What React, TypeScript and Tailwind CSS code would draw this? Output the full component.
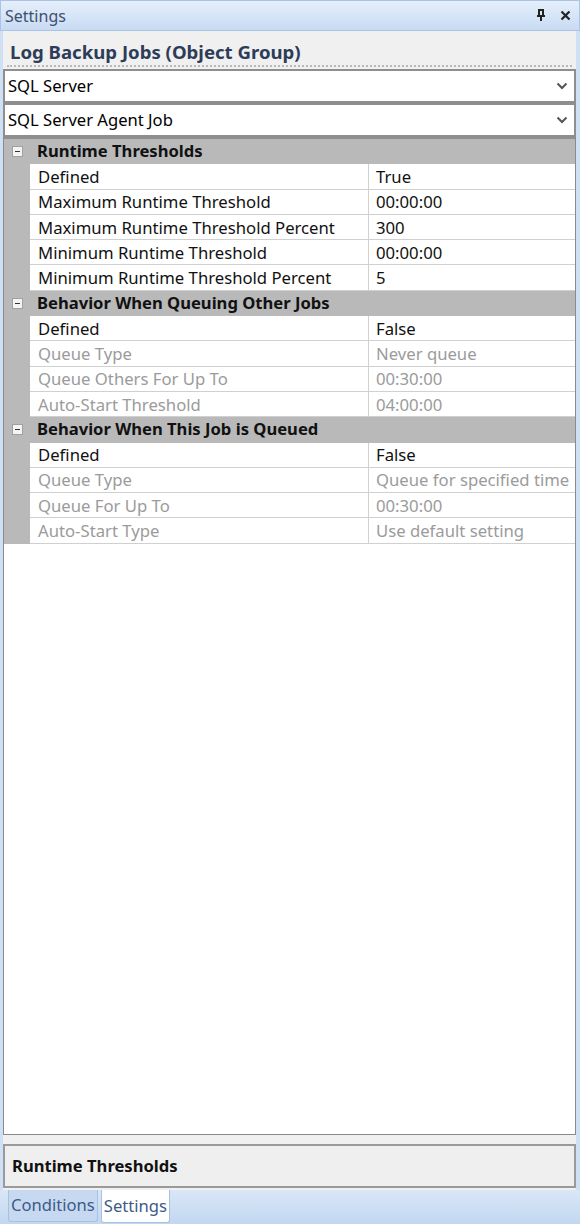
import React from 'react';

type Row = { name: string; value: string; disabled?: boolean };
type Category = { title: string; rows: Row[] };

const categories: Category[] = [
  {
    title: 'Runtime Thresholds',
    rows: [
      { name: 'Defined', value: 'True' },
      { name: 'Maximum Runtime Threshold', value: '00:00:00' },
      { name: 'Maximum Runtime Threshold Percent', value: '300' },
      { name: 'Minimum Runtime Threshold', value: '00:00:00' },
      { name: 'Minimum Runtime Threshold Percent', value: '5' },
    ],
  },
  {
    title: 'Behavior When Queuing Other Jobs',
    rows: [
      { name: 'Defined', value: 'False' },
      { name: 'Queue Type', value: 'Never queue', disabled: true },
      { name: 'Queue Others For Up To', value: '00:30:00', disabled: true },
      { name: 'Auto-Start Threshold', value: '04:00:00', disabled: true },
    ],
  },
  {
    title: 'Behavior When This Job is Queued',
    rows: [
      { name: 'Defined', value: 'False' },
      { name: 'Queue Type', value: 'Queue for specified time', disabled: true },
      { name: 'Queue For Up To', value: '00:30:00', disabled: true },
      { name: 'Auto-Start Type', value: 'Use default setting', disabled: true },
    ],
  },
];

function Chevron() {
  return (
    <svg width="12" height="8" viewBox="0 0 12 8" className="text-[#555]">
      <path d="M1.5 1.5 L6 6 L10.5 1.5" fill="none" stroke="currentColor" strokeWidth="2" />
    </svg>
  );
}

function Dropdown({ label }: { label: string }) {
  return (
    <div className="flex h-[34px] items-center justify-between border-2 border-[#8e8e8e] bg-white pl-[3px] pr-[6px]">
      <span className="text-[16.6px] text-black">{label}</span>
      <Chevron />
    </div>
  );
}

function CategoryRow({ title }: { title: string }) {
  return (
    <div className="flex h-[25.3px] items-center bg-[#b9b9b9]">
      <div className="flex w-[26px] justify-center">
        <div className="flex h-[11px] w-[11px] items-center justify-center border border-[#a0a0a0] bg-[#f4f4f4]">
          <div className="h-[1px] w-[5px] bg-[#333]" />
        </div>
      </div>
      <span className="pl-[7px] text-[16.6px] font-bold text-[#111]">{title}</span>
    </div>
  );
}

function PropRow({ row }: { row: Row }) {
  const color = row.disabled ? 'text-[#9b9b9b]' : 'text-[#111]';
  return (
    <div className="flex h-[25.3px]">
      <div className="w-[26px] shrink-0 bg-[#b9b9b9]" />
      <div className={`flex w-[338px] items-center border-b border-[#d0d0d0] bg-white pl-[8px] text-[16.7px] whitespace-nowrap ${color}`}>
        {row.name}
      </div>
      <div className={`flex flex-1 items-center border-b border-l border-[#d0d0d0] bg-white pl-[7px] text-[16.7px] whitespace-nowrap overflow-hidden ${color}`}>
        {row.value}
      </div>
    </div>
  );
}

export default function App() {
  return (
    <div
      className="flex h-[1224px] w-[580px] flex-col bg-[#cfe0f5]"
      style={{ fontFamily: '"Noto Sans", "Open Sans", sans-serif' }}
    >
      {/* title bar */}
      <div className="flex h-[31px] items-center justify-between border border-[#a9c4e6] bg-gradient-to-b from-[#e6effb] to-[#c8dbf3] pl-[4px] pr-[8px]">
        <span className="text-[16px] text-[#3e5070]">Settings</span>
        <div className="flex items-center gap-[14px]">
          <svg width="10" height="13" viewBox="0 0 10 13">
            <path d="M2 1 H8 M3 1 V7 M7 1 V7 M1 7 H9 M5 7 V12" fill="none" stroke="#222" strokeWidth="2" />
          </svg>
          <svg width="11" height="11" viewBox="0 0 11 11">
            <path d="M1.5 1.5 L9.5 9.5 M9.5 1.5 L1.5 9.5" fill="none" stroke="#222" strokeWidth="2.2" />
          </svg>
        </div>
      </div>

      {/* body */}
      <div className="ml-[3px] mr-[4px] flex flex-1 flex-col bg-[#f0f0f0]">
        <div className="mx-[4px] mt-[8px] border-b-2 border-dotted border-[#b8b8b8] pl-[3px] text-[18.6px] leading-[26px] font-bold text-[#2d3c58]">
          Log Backup Jobs (Object Group)
        </div>
        <div className="mt-[2px] flex flex-col">
          <Dropdown label="SQL Server" />
          <Dropdown label="SQL Server Agent Job" />
        </div>

        {/* property grid */}
        <div className="flex flex-1 flex-col border border-[#8a8a8a] border-t-0 bg-white">
          <div className="border-t-2 border-[#8e8e8e]">
            {categories.map((c) => (
              <div key={c.title}>
                <CategoryRow title={c.title} />
                {c.rows.map((r, i) => (
                  <PropRow key={i} row={r} />
                ))}
              </div>
            ))}
          </div>
          <div className="flex-1" />
        </div>

        {/* description */}
        <div className="mt-[9px] flex h-[44px] items-center border-2 border-[#9a9a9a] bg-[#efefef] pl-[7px]">
          <span className="text-[16.6px] font-bold text-[#111]">Runtime Thresholds</span>
        </div>
        <div className="h-[2px]" />
      </div>

      {/* tabs */}
      <div className="flex h-[34px] items-start gap-[3px] bg-gradient-to-b from-[#d9e7f8] to-[#c3d7f0] pl-[8px]">
        <div className="flex h-[32px] items-center rounded-b-[3px] border border-t-0 border-[#a9c1e0] bg-[#c6d9f1] px-[2px] text-[16.6px] text-[#3d5a88]">
          Conditions
        </div>
        <div className="flex h-[33px] items-center rounded-b-[3px] border border-t-0 border-[#a9c1e0] bg-white px-[2px] text-[16.6px] text-[#3d5a88]">
          Settings
        </div>
      </div>
    </div>
  );
}
